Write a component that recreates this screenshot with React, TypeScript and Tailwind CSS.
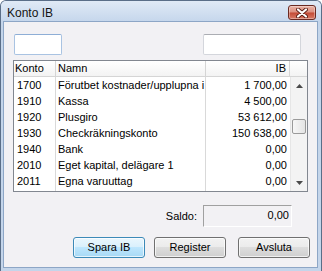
import React from "react"

const rows = [
  ["1700", "Förutbet kostnader/upplupna i", "1 700,00"],
  ["1910", "Kassa", "4 500,00"],
  ["1920", "Plusgiro", "53 612,00"],
  ["1930", "Checkräkningskonto", "150 638,00"],
  ["1940", "Bank", "0,00"],
  ["2010", "Eget kapital, delägare 1", "0,00"],
  ["2011", "Egna varuuttag", "0,00"],
]

function CloseButton() {
  return (
    <div className="ml-auto mt-[4px] flex h-[15px] w-[28px] items-center justify-center rounded-[3px] border border-[#6b2a22] bg-[linear-gradient(to_bottom,#eab3a6_0%,#dc9080_48%,#c44a35_52%,#d87a66_100%)] shadow-[inset_0_0_0_1px_rgba(255,255,255,0.35)]">
      <svg width="12" height="10" viewBox="0 0 12 10">
        <path d="M2 1.5 L10 8.5 M10 1.5 L2 8.5" stroke="#5a1d14" strokeWidth="4" strokeLinecap="round" />
        <path d="M2 1.5 L10 8.5 M10 1.5 L2 8.5" stroke="#ffffff" strokeWidth="2.2" strokeLinecap="round" />
      </svg>
    </div>
  )
}

function Arrow({ down }: { down?: boolean }) {
  return (
    <div className="flex h-[17px] items-center justify-center">
      <svg width="7" height="4" viewBox="0 0 7 4">
        <polygon points={down ? "0,0 7,0 3.5,4" : "0,4 7,4 3.5,0"} fill="#4a4a4a" />
      </svg>
    </div>
  )
}

function Scrollbar() {
  return (
    <div className="flex w-[17px] flex-col border-l border-[#e6e6e6] bg-[#f3f3f3]">
      <Arrow />
      <div className="h-[25px]" />
      <div className="mx-[1px] h-[15px] rounded-[2px] border border-[#9a9a9a] bg-[linear-gradient(to_right,#f7f7f7,#e4e4e4)]" />
      <div className="flex-1" />
      <Arrow down />
    </div>
  )
}

function Button({ label, primary, className }: { label: string; primary?: boolean; className?: string }) {
  return (
    <div
      className={
        "flex h-[21px] w-[72px] items-center justify-center rounded-[3px] border shadow-[inset_0_0_0_1px_rgba(255,255,255,0.7)] " +
        (primary
          ? "border-[#3c8ab8] bg-[linear-gradient(to_bottom,#eaf6fd_0%,#d9f0fc_50%,#bee6fd_50%,#a7d9f5_100%)] "
          : "border-[#707070] bg-[linear-gradient(to_bottom,#f2f2f2_0%,#ebebeb_50%,#dddddd_50%,#cfcfcf_100%)] ") +
        (className ?? "")
      }
    >
      {label}
    </div>
  )
}

export default function App() {
  return (
    <div className="h-[271px] w-[322px] bg-white font-['Liberation_Sans',Arial,sans-serif] text-[11px] text-black">
      <div className="flex h-full w-full flex-col rounded-t-[6px] border border-b-0 border-[#5a6e88] bg-[#c4d5ea]">
        {/* title bar */}
        <div className="flex h-[20px] items-start rounded-t-[5px] bg-[linear-gradient(to_bottom,#e0eaf6,#c6d7ec)] pl-[6px] pr-[5px]">
          <span className="mt-[5px] text-[12px] leading-[14px] text-[#151515]">Konto IB</span>
          <CloseButton />
        </div>

        {/* client */}
        <div className="mb-[3px] ml-[2px] mr-[3px] flex flex-1 flex-col border border-[#8da6c6] bg-[#f2f1f4] pt-[12px]">
          <div className="flex h-[21px]">
            <div className="ml-[10px] w-[48px] rounded-[2px] border border-[#a9c3e2] border-t-[#8eaed6] bg-white" />
            <div className="ml-[141px] w-[98px] rounded-[2px] border border-[#d4d6dc] border-t-[#abadb3] bg-white" />
          </div>

          {/* list */}
          <div className="ml-[9px] mt-[5px] flex h-[132px] w-[295px] flex-col border border-[#828790] bg-white">
            <div className="flex h-[16px] border-b border-[#d5d5d5] bg-[linear-gradient(to_bottom,#ffffff,#f3f3f3)] leading-[15px]">
              <div className="w-[42px] border-r border-[#d5d5d5] pl-[1px]">Konto</div>
              <div className="w-[150px] border-r border-[#d5d5d5] pl-[2px]">Namn</div>
              <div className="w-[84px] border-r border-[#d5d5d5] pr-[3px] text-right">IB</div>
              <div className="flex-1" />
            </div>
            <div className="flex flex-1">
              <div className="flex w-[276px] flex-col">
                {rows.map(([konto, namn, ib]) => (
                  <div key={konto} className="flex h-[16px] leading-[16px]">
                    <div className="w-[42px] border-r border-[#d9d9d9] pl-[3px]">{konto}</div>
                    <div className="w-[150px] overflow-hidden whitespace-nowrap border-r border-[#d9d9d9] pl-[2px]">{namn}</div>
                    <div className="w-[84px] pr-[3px] text-right">{ib}</div>
                  </div>
                ))}
                <div className="flex flex-1">
                  <div className="w-[42px] border-r border-[#d9d9d9]" />
                  <div className="w-[150px] border-r border-[#d9d9d9]" />
                </div>
              </div>
              <Scrollbar />
            </div>
          </div>

          {/* saldo */}
          <div className="mt-[13px] flex h-[22px] items-center justify-end pr-[25px]">
            <span className="mr-[6px]">Saldo:</span>
            <div className="flex h-full w-[89px] justify-end border border-[#a0a0a0] border-b-white border-r-white pr-[2px] pt-[2px] leading-[14px]">
              0,00
            </div>
          </div>

          {/* buttons */}
          <div className="mt-[10px] flex">
            <Button label="Spara IB" primary className="ml-[69px]" />
            <Button label="Register" className="ml-[9px]" />
            <Button label="Avsluta" className="ml-[12px]" />
          </div>
        </div>
      </div>
    </div>
  )
}
